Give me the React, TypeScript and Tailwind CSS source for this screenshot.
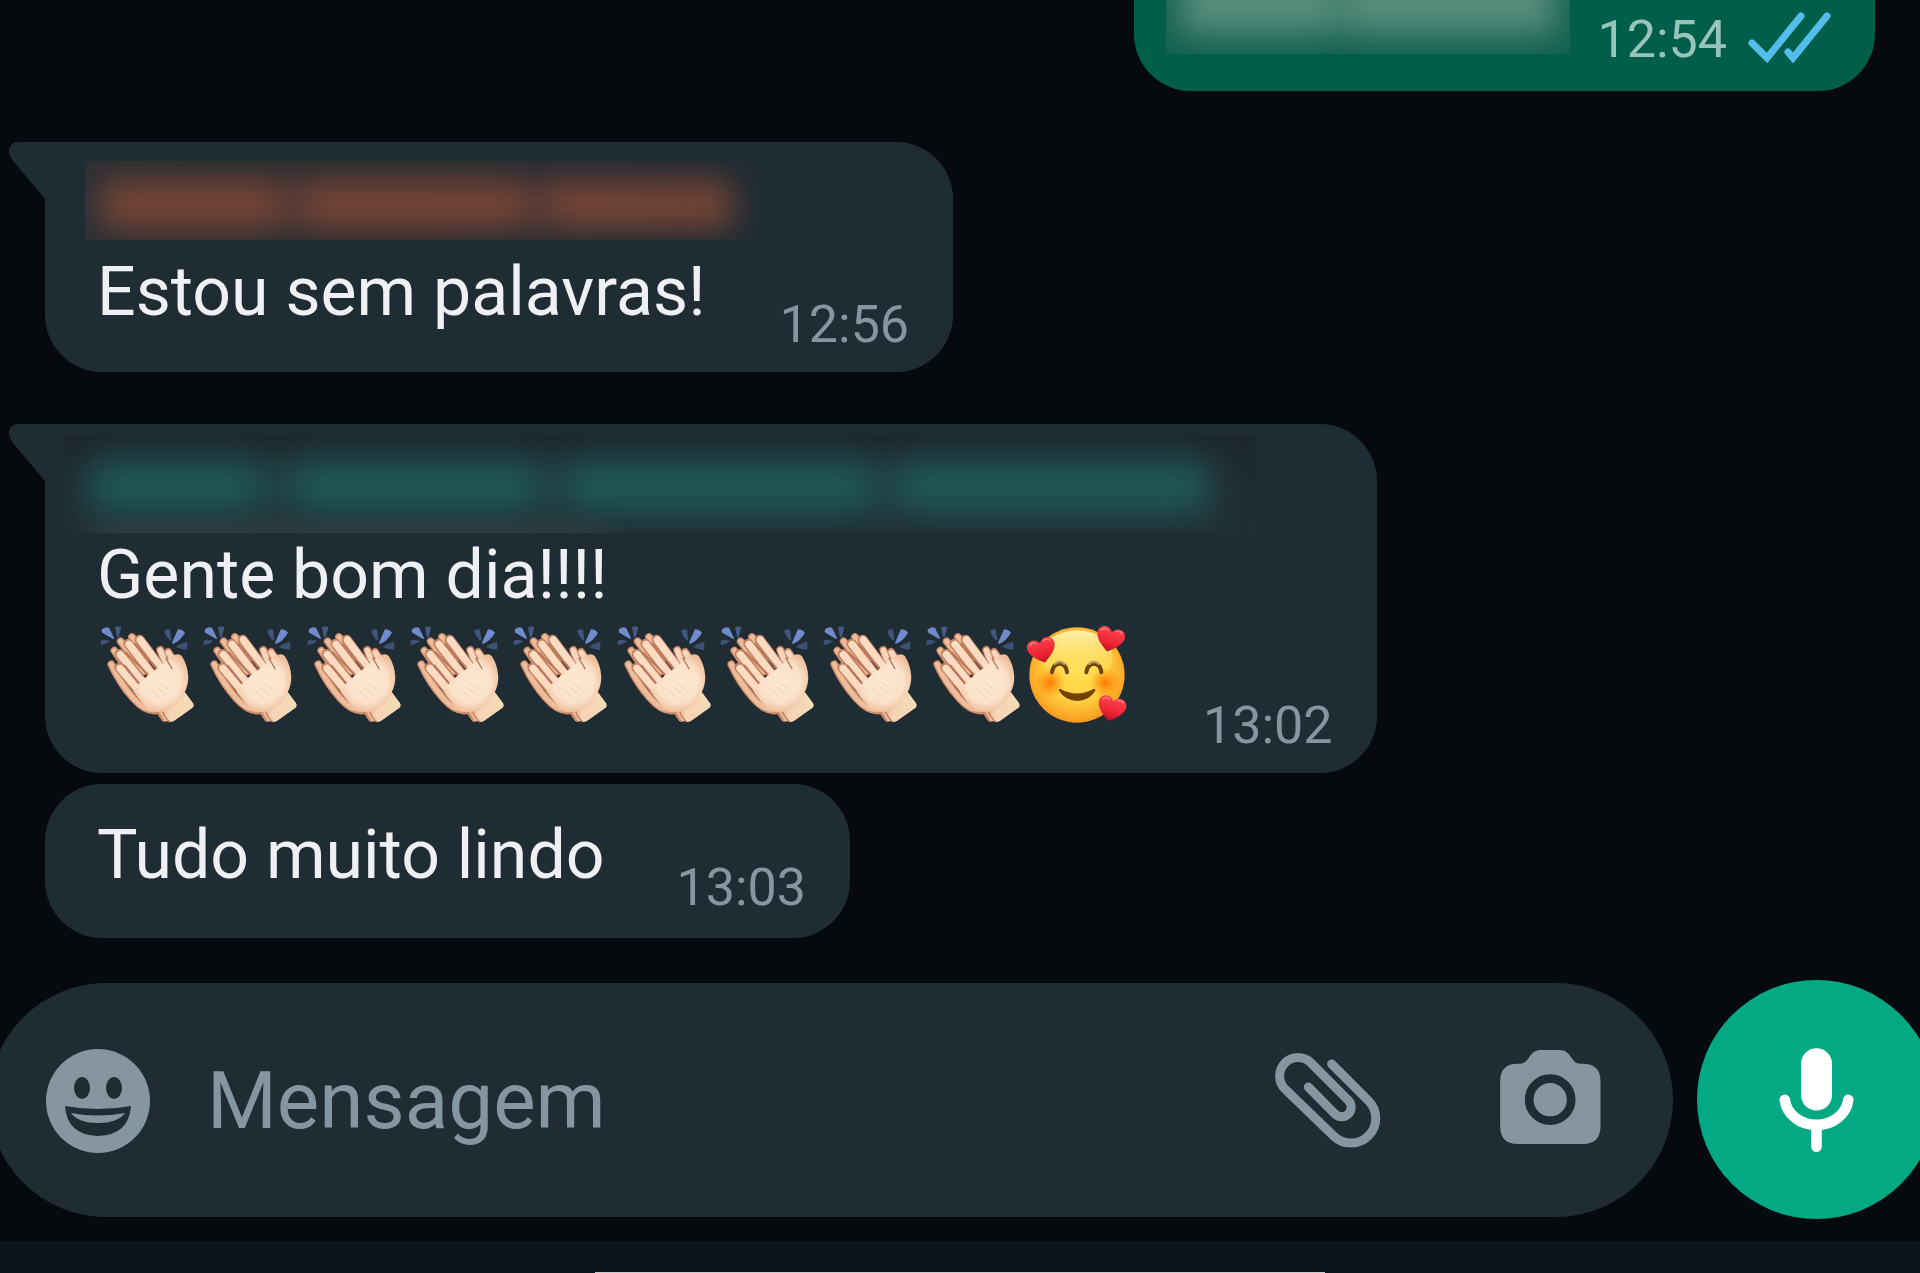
import type { ReactNode } from "react";

function ClapEmoji() {
    return (
        <svg viewBox="54 45 310 300" className="w-full" aria-hidden="true">
            <defs>
                <linearGradient id="wrist" x1="0" y1="0" x2="1" y2="0">
                    <stop offset="0" stopColor="#d99673" />
                    <stop offset="0.35" stopColor="#f6d3b4" />
                    <stop offset="1" stopColor="#f5dcb6" />
                </linearGradient>
                <radialGradient id="palm" gradientUnits="userSpaceOnUse" cx="240" cy="215" r="95">
                    <stop offset="0" stopColor="#fde9d0" />
                    <stop offset="0.65" stopColor="#fbe2ca" />
                    <stop offset="1" stopColor="#eebd98" />
                </radialGradient>
            </defs>
            <path d="M67 57q10-8 20-4l15 31q0 4-4 2L67 68q-5-5 0-11z" fill="#6f8bcb" />
            <path d="M105 52q10-5 19 0l-8 30q-3 2-5-1z" fill="#445c83" />
            <path d="M63 91q14-5 28 3-12 9-28 12-3-7 0-15z" fill="#3c5275" />
            <path d="M253 62q9-6 17-3l4 30q-2 4-6 0-12-11-15-27z" fill="#3f567c" />
            <path d="M294 58q12 0 21 10-13 24-36 34-4-1-2-6z" fill="#6f8bcb" />
            <path d="M290 108q16-9 31-13 3 12 0 24-18 0-31-7z" fill="#3c5275" />
            <g fill="none" strokeLinecap="round" strokeLinejoin="round">
                <path d="M241 120l20 50M264 126l40 60" stroke="#c98463" strokeWidth="24" />
                <path d="M241 121l20 50M265 128l40 60" stroke="#f8d6bb" strokeWidth="17" />
                <path d="M94 163Q120 220 160 265T235 300M103 122l70 100M122 94l70 90M156 81l50 60" stroke="#cf8f6d" strokeWidth="23" />
                <path d="M94 163Q120 220 160 265T235 295M103 122l70 100M122 94l70 90M156 81l50 60" stroke="#eebd9b" strokeWidth="15" />
            </g>
            <path d="M226 304l21 29q6 5 14 0 10 6 21 0l56-40q6-6 1-14l-25-34-70 45z" fill="url(#wrist)" />
            <path d="M232 306l22 30M248 302q4 20 22 34" fill="none" stroke="#c27b5b" strokeWidth="4" />
            <g fill="none" strokeLinecap="round" strokeLinejoin="round">
                <path d="M118 173l82 97M119 132l90 110M145 101l85 110M179 89l75 100" stroke="#c38162" strokeWidth="30" />
                <path d="M120 175l82 97M121 134l90 110M147 103l85 110M181 90l75 100" stroke="#fbdcc3" strokeWidth="22" />
            </g>
            <path
                d="M176 222l30-28 26-19 22-18q36-36 52-18 17 27 19 61 0 26-11 47-12 31-46 52-38 17-67-5-22-24-40-49z"
                fill="url(#palm)"
            />
            <path d="M230 232l29 23M238 218l26 19M212 236l30 30" fill="none" stroke="#f2cfad" strokeWidth="3" strokeLinecap="round" />
            <g fill="none" stroke="#bb775a" strokeWidth="6" strokeLinecap="round">
                <path d="M134 167l42 52M138 128l65 65M165 102l64 72" />
                <path d="M258 145l18 31" strokeWidth="4" />
            </g>
        </svg>
    );
}

function HeartShape({ x, y, angle }: { x: number; y: number; angle: number }) {
    return (
        <g transform={`translate(${x} ${y}) rotate(${angle})`}>
            <path d="M0 40C-22 24-43 8-42-13-41-34-13-42 0-20 13-42 41-34 42-13 43 8 22 24 0 40z" fill="url(#heart)" />
            <path d="M-32-19q8-12 18-4M12-25q10-6 18 2" fill="none" stroke="#ff777b" strokeWidth="5" strokeLinecap="round" />
        </g>
    );
}

function LovedFaceEmoji() {
    return (
        <svg viewBox="84 45 310 300" className="w-full overflow-visible" aria-hidden="true">
            <defs>
                <radialGradient id="face" cx="0.5" cy="0.45" r="0.58">
                    <stop offset="0" stopColor="#ffe052" />
                    <stop offset="0.55" stopColor="#fed142" />
                    <stop offset="0.85" stopColor="#fba927" />
                    <stop offset="1" stopColor="#f28a1a" />
                </radialGradient>
                <linearGradient id="shine" x1="0" y1="0" x2="0" y2="1">
                    <stop offset="0" stopColor="#fff0ad" />
                    <stop offset="1" stopColor="#ffe052" stopOpacity="0" />
                </linearGradient>
                <radialGradient id="cheek">
                    <stop offset="0" stopColor="#ff7900" />
                    <stop offset="1" stopColor="#ff8a0b" stopOpacity="0" />
                </radialGradient>
                <linearGradient id="heart" x1="0" y1="0" x2="0" y2="1">
                    <stop offset="0" stopColor="#fb454c" />
                    <stop offset="0.6" stopColor="#ee2534" />
                    <stop offset="1" stopColor="#bd101f" />
                </linearGradient>
            </defs>
            <circle cx="231" cy="195" r="143" fill="url(#face)" />
            <ellipse cx="231" cy="140" rx="107" ry="79" fill="url(#shine)" />
            <circle cx="150" cy="218" r="46" fill="url(#cheek)" />
            <circle cx="316" cy="218" r="46" fill="url(#cheek)" />
            <path d="M156 187q4-26 23-26t22 26M259 187q4-26 23-26t22 26" fill="none" stroke="#70420e" strokeWidth="12" strokeLinecap="round" />
            <path d="M165 162q14-13 28 0M268 162q14-13 28 0" fill="none" stroke="#b99b5a" strokeWidth="7" strokeLinecap="round" />
            <path d="M180 236q51 29 102 0 6 0 3 8-18 29-53 29t-54-29q-3-7 2-8z" fill="#754100" />
            <HeartShape x={125} y={119} angle={-14} />
            <HeartShape x={331} y={86} angle={14} />
            <HeartShape x={335} y={294} angle={14} />
        </svg>
    );
}

function DoubleCheck() {
    return (
        <svg viewBox="1747 10 84 52" className="h-[52px] w-[84px]" fill="none" stroke="#53bdeb" strokeWidth="7" strokeLinecap="round" role="img" aria-label="Lida">
            <path d="M1752 42l15 15 34-42M1788 51l5 6 34-42" />
        </svg>
    );
}

function BubbleTail() {
    return (
        <svg viewBox="0 0 37 57" className="absolute top-0 -left-9 h-[57px] w-[37px]" fill="#202c33" aria-hidden="true">
            <path d="M37 0H9C2 0-1 6 0 11q1 4 4 8l32 38h1z" />
        </svg>
    );
}

function Bubble({ time, name, children }: { time: string; name?: ReactNode; children: ReactNode }) {
    return (
        <article className={`relative w-fit rounded-[57px] bg-[#202c33] pr-[44px] pl-[52px] ${name ? "rounded-tl-none pb-[17px]" : "pt-[31px] pb-[20px]"}`}>
            {name && <BubbleTail />}
            {name}
            <div className="flex items-end justify-between gap-[72px]">
                {children}
                <time className="text-[52px] leading-[60px] text-[#8696a0]">{time}</time>
            </div>
        </article>
    );
}

export default function App() {
    return (
        <div className="flex min-h-screen flex-col overflow-hidden bg-[#060a0f] font-[Roboto,sans-serif]">
            <main className="flex flex-1 flex-col px-[45px]">
                <article className="flex items-center self-end rounded-b-[57px] bg-[#005e4b] pt-[10px] pr-[44px] pb-[21px] pl-[32px]">
                    <div className="-mt-[10px] mr-[28px] h-[54px] w-[404px] self-start overflow-hidden bg-[#14614f]">
                        <div className="-mt-[30px] flex h-[64px] px-[14px] blur-[16px]">
                            <div className="w-[150px] bg-[#588d7d]" />
                            <div className="w-[18px] bg-[#3f7b6a]" />
                            <div className="flex-1 bg-[#588d7d]" />
                        </div>
                    </div>
                    <time className="text-[52px] leading-[60px] text-[#99c4b9]">12:54</time>
                    <div className="mb-[6px] ml-[20px]">
                        <DoubleCheck />
                    </div>
                </article>

                <div className="mt-[51px]">
                    <Bubble
                        time="12:56"
                        name={
                            <div className="pt-[19px] pb-[12px]">
                                <div className="-ml-[12px] h-[79px] w-[673px] overflow-hidden bg-gradient-to-r from-[#2c2f34] via-[#2a2d32] to-[#202b33]">
                                    <div className="flex h-full pt-[20px] pr-[26px] pb-[12px] pl-[16px] blur-[16px]">
                                        <div className="w-[180px] bg-[#784536]" />
                                        <div className="w-[20px] bg-[#4a3433]" />
                                        <div className="w-[226px] bg-[#784536]" />
                                        <div className="w-[20px] bg-[#4a3433]" />
                                        <div className="flex-1 bg-[#784536]" />
                                    </div>
                                </div>
                            </div>
                        }
                    >
                        <p className="mr-[2px] mb-[23px] text-[68px] leading-[80px] text-[#eef0f4]">Estou sem palavras!</p>
                    </Bubble>
                </div>

                <div className="mt-[52px]">
                    <Bubble
                        time="13:02"
                        name={
                            <div className="pt-[11px] pb-[2px]">
                                <div className="-mr-[44px] -ml-[34px] h-[98px] w-[1193px] overflow-hidden bg-gradient-to-b from-[#1c262d] via-[#202b32] to-[#212d34]">
                                    <div className="flex h-[98px] pt-[26px] pr-[46px] pb-[20px] pl-[26px] blur-[18px]">
                                        <div className="w-[170px] bg-[#1f5b59]" />
                                        <div className="w-[34px] bg-[#213b40]" />
                                        <div className="w-[244px] bg-[#1f5b59]" />
                                        <div className="w-[30px] bg-[#213b40]" />
                                        <div className="w-[304px] bg-[#1f5b59]" />
                                        <div className="w-[26px] bg-[#213b40]" />
                                        <div className="flex-1 bg-[#1f5b59]" />
                                    </div>
                                    <div className="-mt-[4px] ml-[30px] h-[16px] w-[510px] bg-[#3b464c] blur-[12px]" />
                                </div>
                            </div>
                        }
                    >
                        <div className="mb-[31px]">
                            <p className="text-[68px] leading-[80px] text-[#eef0f4]">Gente bom dia!!!!</p>
                            <div className="mt-[10px] ml-px grid w-[1033px] grid-cols-10" role="img" aria-label="Aplausos e rosto sorridente com corações">
                                {Array.from({ length: 9 }, (_, i) => (
                                    <ClapEmoji key={i} />
                                ))}
                                <LovedFaceEmoji />
                            </div>
                        </div>
                    </Bubble>
                </div>

                <div className="mt-[11px]">
                    <Bubble time="13:03">
                        <p className="mb-[23px] text-[68px] leading-[80px] text-[#eef0f4]">Tudo muito lindo</p>
                    </Bubble>
                </div>
            </main>

            <form className="mt-[42px] -mr-[16px] -ml-[11px] mb-[22px] flex items-center gap-6" onSubmit={(e) => e.preventDefault()}>
                <div className="flex h-[234px] min-w-0 flex-1 items-center rounded-full bg-[#202c33] pt-[2px] pr-[72px] pl-[57px] text-[#8696a0]">
                    <button type="button" aria-label="Emojis" className="shrink-0">
                        <svg viewBox="0 0 104 104" className="size-[104px]">
                            <circle cx="52" cy="52" r="52" fill="currentColor" />
                            <ellipse cx="36" cy="39" rx="8" ry="11" fill="#202c33" />
                            <ellipse cx="68" cy="39" rx="8" ry="11" fill="#202c33" />
                            <path d="M19 57q33 6 66 0-2 29-33 30-31-1-33-30z" fill="#202c33" />
                            <path d="M25 64q27 5 54 0-7 10-27 10t-27-10z" fill="currentColor" />
                        </svg>
                    </button>
                    <input
                        type="text"
                        aria-label="Mensagem"
                        placeholder="Mensagem"
                        className="ml-[57px] min-w-0 flex-1 bg-transparent text-[80px] leading-[96px] text-[#eef0f4] outline-none placeholder:text-[#8696a0]"
                    />
                    <button type="button" aria-label="Anexar" className="shrink-0">
                        <svg viewBox="130 95 321 291" className="h-[97px] w-[107px]" fill="none" stroke="currentColor" strokeWidth="27" strokeLinecap="round">
                            <path d="M303 131L413 241A74 74 0 0 1 309 347L163 206A55 55 0 0 1 241 128L353 240A28 28 0 0 1 313 281L233 200" />
                        </svg>
                    </button>
                    <button type="button" aria-label="Câmera" className="ml-[119px] shrink-0">
                        <svg viewBox="810 88 302 306" className="h-[102px] w-[101px]">
                            <path
                                d="M862 129h8c29 0 25-41 62-41h56c37 0 33 41 62 41h8q53 0 53 53v135q0 53-53 53H862q-52 0-52-53V182q0-53 52-53z"
                                fill="currentColor"
                            />
                            <circle cx="960" cy="237" r="63" fill="none" stroke="#202c33" strokeWidth="26" />
                        </svg>
                    </button>
                </div>
                <button type="button" aria-label="Gravar áudio" className="flex size-[239px] shrink-0 items-center justify-center rounded-full bg-[#02a983]">
                    <svg viewBox="418 265 225 313" className="h-[104px] w-[75px]" fill="none" stroke="#fff" strokeWidth="32" strokeLinecap="round">
                        <rect x="484" y="266" width="93" height="187" rx="46" fill="#fff" stroke="none" />
                        <path d="M435 421a96 84 0 0 0 191 0M530.500 505v57" />
                    </svg>
                </button>
            </form>

            <footer className="flex h-8 items-end justify-center bg-[#0b131b]">
                <div className="h-px w-[38%] bg-[#c9cbcd]" />
            </footer>
        </div>
    );
}
